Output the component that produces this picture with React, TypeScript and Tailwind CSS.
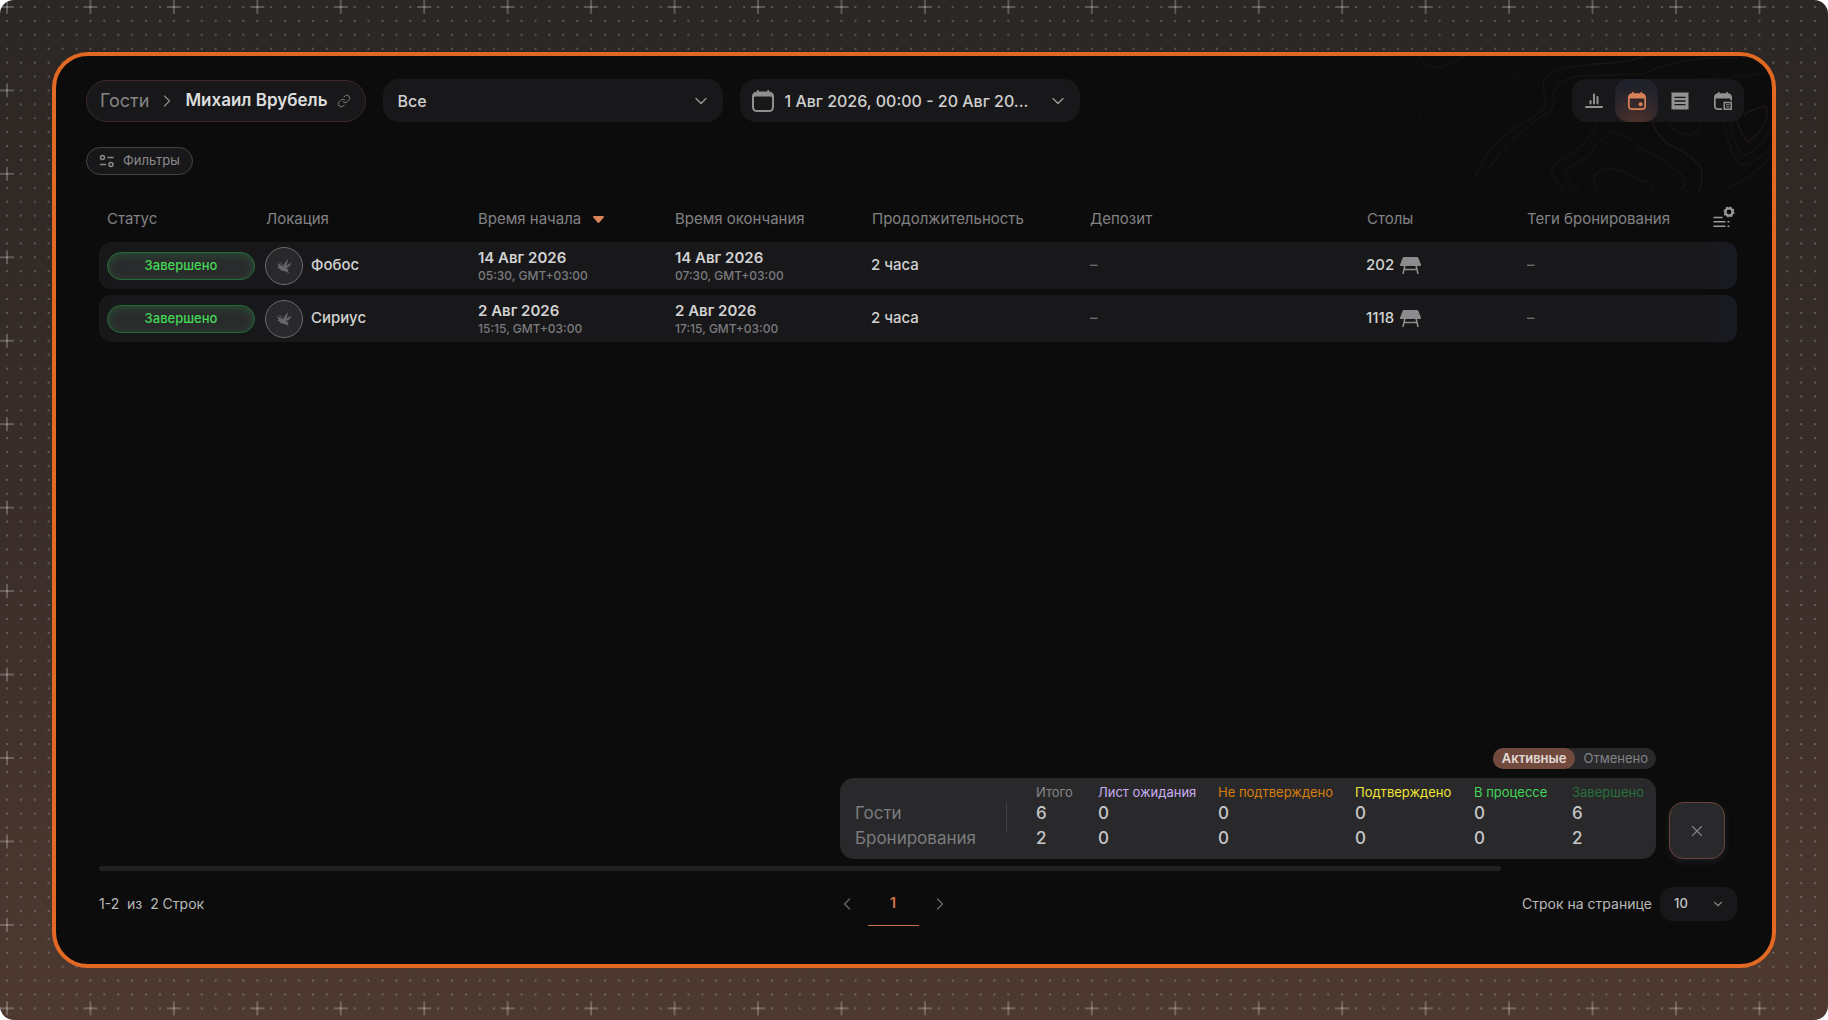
import React from 'react';
import { ChevronDown, ChevronLeft, ChevronRight, Link as LinkIcon, X } from 'lucide-react';
import clsx from 'clsx';

const bookings = [
  {
    id: 1,
    location: 'Фобос',
    start: ['14 Авг 2026', '05:30, GMT+03:00'],
    end: ['14 Авг 2026', '07:30, GMT+03:00'],
    duration: '2 часа',
    table: '202',
  },
  {
    id: 2,
    location: 'Сириус',
    start: ['2 Авг 2026', '15:15, GMT+03:00'],
    end: ['2 Авг 2026', '17:15, GMT+03:00'],
    duration: '2 часа',
    table: '1118',
  },
];

const summary = [
  { label: 'Итого', color: 'text-[#858587]', guests: 6, bookings: 2 },
  { label: 'Лист ожидания', color: 'text-[#c9aef0]', guests: 0, bookings: 0 },
  { label: 'Не подтверждено', color: 'text-[#d67d0c]', guests: 0, bookings: 0 },
  { label: 'Подтверждено', color: 'text-[#eee535]', guests: 0, bookings: 0 },
  { label: 'В процессе', color: 'text-[#41d657]', guests: 0, bookings: 0 },
  { label: 'Завершено', color: 'text-[#28703b]', guests: 6, bookings: 2 },
];

const ChartIcon = () => (
  <svg viewBox="0 0 18 18" className="size-[18px]" fill="currentColor">
    <rect x="0" y="14" width="18" height="2" rx="1" />
    <rect x="4.5" y="8" width="2" height="4.5" rx="1" />
    <rect x="8" y="1.5" width="2" height="11" rx="1" />
    <rect x="11.5" y="4" width="2" height="8.5" rx="1" />
  </svg>
);

const CalendarIcon = () => (
  <svg viewBox="0 0 18 18" className="size-[18px]" fill="currentColor">
    <path
      fillRule="evenodd"
      d="M4 0h1.6v1.2h6.8V0H14v1.3c2.4.2 4 1.6 4 4V14c0 2.500-1.500 4-4 4H4c-2.500 0-4-1.500-4-4V5.300c0-2.400 1.600-3.800 4-4zM1.700 6.500V14c0 1.500.8 2.300 2.300 2.300h10c1.500 0 2.300-.8 2.300-2.300V6.500z"
    />
    <circle cx="12.600" cy="12.300" r="2" />
  </svg>
);

const ReceiptIcon = () => (
  <svg viewBox="0 0 18 18" className="size-[18px]">
    <path
      fill="currentColor"
      d="M.5 0l1.400 1L3.300 0l1.400 1 1.500-1 1.400 1L9 0l1.400 1 1.400-1 1.500 1 1.400-1 1.400 1 1.400-1v18l-1.400-1-1.400 1-1.400-1-1.500 1-1.400-1L9 18l-1.400-1-1.400 1-1.500-1-1.400 1-1.400-1-1.400 1z"
    />
    <path stroke="#18181a" strokeWidth="1.300" d="M3.500 5.300h11M3.500 9h11M3.500 12.700h11" />
  </svg>
);

const CalendarNoteIcon = () => (
  <svg viewBox="0 0 18 18" className="size-[18px]" fill="currentColor">
    <path d="M4 0h1.600v1.200h6.800V0H14v1.300c2.400.2 4 1.600 4 4V8.500h-1.700V6.500H1.700V14c0 1.500.8 2.300 2.300 2.300h4V18H4c-2.500 0-4-1.500-4-4V5.300c0-2.400 1.600-3.800 4-4z" />
    <path fillRule="evenodd" d="M9.500 9.700H18V18H9.500zM11 11.200v5.300h5.500v-5.300z" />
    <path d="M12 12.200h3.500v1.100H12zM12 14.400h3.500v1.100H12z" />
  </svg>
);

const DateIcon = () => (
  <svg viewBox="0 0 22 22" className="size-[22px] shrink-0 text-[#8f8f90]" fill="currentColor">
    <path
      fillRule="evenodd"
      d="M5 0h1.700v1.500h8.600V0H17v1.600c3.200.3 5 2 5 5V17c0 3.200-1.800 5-5 5H5c-3.200 0-5-1.800-5-5V6.600c0-3 1.800-4.700 5-5zM2 7.500V17c0 2.100 1 3.100 3 3.100h12c2 0 3-1 3-3.100V7.500c-.3-.7-1-1-2-1H4c-1 0-1.700.3-2 1z"
    />
  </svg>
);

const FiltersIcon = () => (
  <svg viewBox="0 0 16 14" className="h-3.5 w-4" fill="none" stroke="currentColor" strokeWidth="1.500">
    <circle cx="3.500" cy="3.500" r="2" />
    <path d="M9 3.500h5M1.500 10.500h5" strokeLinecap="round" />
    <circle cx="12" cy="10.500" r="2" />
  </svg>
);

const TableIcon = () => (
  <svg viewBox="0 0 21 17" className="h-[17px] w-[21px] text-[#8c8c8e]" fill="currentColor">
    <path d="M4 0h13c.7 0 1.200.3 1.400 1l2.500 6.500c.3.900-.1 1.500-1 1.500H1.100c-.9 0-1.300-.6-1-1.500L2.600 1C2.800.3 3.300 0 4 0z" />
    <path fill="none" stroke="currentColor" strokeWidth="1.600" d="M5 8L3 17M16 8l2 9M4.200 12.500h12.600" />
  </svg>
);

const ColumnsIcon = () => (
  <svg viewBox="0 0 22 22" className="size-[22px]" fill="none" stroke="currentColor">
    <path strokeWidth="1.400" d="M.5 11.500h9M.5 15.800h12M14.500 15.800h2M.5 20.200h12M14.500 20.200h2" />
    <circle cx="16" cy="6" r="3.600" strokeWidth="2.400" />
    <circle cx="16" cy="6" r="5" strokeWidth="1.200" strokeDasharray="2 1.930" />
  </svg>
);

const FalconIcon = () => (
  <svg viewBox="0 0 16 16" className="size-4 text-[#68686b]" fill="currentColor">
    <path d="M0 5l4 1.500 3 2L9.500 4 12 1 11 5.500 10 8 16 4l-4 5-2.500 1 3 1.500-1 1.500 2 2.500-5-2.500L4 12l.5-1L1 9.500l2-.5L1.500 7 3 7.200z" />
    <path fill="none" stroke="currentColor" strokeWidth=".8" d="M3 4l4 3M11 9.500l4-3" />
  </svg>
);

const DotGrid = () => (
  <svg className="pointer-events-none absolute inset-0 size-full" aria-hidden="true">
    <defs>
      <pattern id="dots" width="13.908" height="13.908" patternUnits="userSpaceOnUse">
        <rect x="6" y="6" width="2" height="2" fill="#fff" fillOpacity=".22" />
      </pattern>
      <pattern id="plus" width="83.450" height="83.450" patternUnits="userSpaceOnUse">
        <path d="M0 7h14M7 0v14" stroke="#fff" strokeOpacity=".3" strokeWidth="1.500" />
      </pattern>
    </defs>
    <rect width="100%" height="100%" fill="url(#dots)" />
    <rect width="100%" height="100%" fill="url(#plus)" />
  </svg>
);

const Contours = () => (
  <>
    <svg
      viewBox="0 168 1176 612"
      className="pointer-events-none absolute top-0 right-0 h-[204px] w-[392px]"
      fill="none"
      strokeWidth="4"
      aria-hidden="true"
    >
      <g stroke="#111010">
        <path d="M50 190Q95 230 110 300T125 400M90 178Q140 250 150 285Q190 285 215 250Q260 200 310 168" />
        <path d="M170 395Q200 330 270 290Q350 230 395 168M195 430Q240 340 320 290Q400 250 430 200L450 168" />
        <path d="M215 465Q260 360 370 310Q450 290 470 230Q500 180 560 168M360 560Q400 470 500 420Q560 390 600 366" />
        <path d="M440 540Q450 500 500 470Q560 420 620 366M440 540Q500 550 520 573" />
        <path d="M1092 290Q1130 270 1170 262M1092 305L1176 280M1090 580L1176 520M1108 603Q1150 590 1176 555M1108 650L1176 600M1110 700L1176 650M1130 740L1176 700" />
      </g>
      <g stroke="#171312">
        <path d="M115 168Q140 205 175 203Q215 195 252 168" />
        <path d="M285 530Q330 420 430 370Q510 330 495 290Q480 240 510 220Q560 195 640 195" />
        <path d="M330 500Q400 400 500 340Q530 320 520 280Q540 230 610 228Q700 225 790 222Q880 178 1000 174L1110 172" />
        <path d="M555 573Q490 510 530 490Q620 440 655 366" />
        <path d="M600 573Q540 530 560 510Q600 480 620 470Q680 395 705 395Q740 400 780 445Q900 500 918 545Q915 565 890 573" />
        <path d="M655 573Q630 540 650 520Q670 505 700 507Q740 515 780 540Q830 550 818 573" />
        <path d="M862 366Q880 400 930 405Q955 400 965 366M945 235Q1050 240 1150 218" />
        <path d="M1050 366Q1070 460 1090 465Q1130 465 1176 380M1030 366Q1060 490 1085 495Q1130 490 1176 440M1030 573Q1120 530 1176 470" />
      </g>
      <g stroke="#211714">
        <path d="M640 192Q740 190 795 168M815 366Q830 400 860 430Q950 470 965 510Q968 550 955 573" />
        <path d="M1070 360Q1090 420 1105 423Q1120 420 1155 370Q1168 325 1155 320Q1130 320 1092 345" />
      </g>
    </svg>
    <svg
      viewBox="0 0 80 90"
      className="pointer-events-none absolute bottom-0 left-0 h-[90px] w-20"
      fill="none"
      stroke="#131212"
      aria-hidden="true"
    >
      <path d="M0 14Q14 6 26 5M0 24Q16 16 30 14M0 33Q14 22 30 24M0 44Q14 36 28 37M0 55Q14 42 30 43M3 62Q16 50 32 53M18 84Q28 74 40 72Q50 68 54 62M28 88Q46 78 60 79Q70 78 76 74" />
    </svg>
  </>
);

const TopBar = () => (
  <header className="flex items-center gap-[17px] pr-7 pl-[30px]">
    <nav className="flex h-[42px] shrink-0 items-center rounded-full border border-[#3b2a27] bg-[#18181a] pr-3.5 pl-[13px] text-[17px]">
      <a href="#guests" className="text-lg text-[#868686]">
        Гости
      </a>
      <ChevronRight className="mx-2 size-5 text-[#8a8a8a]" strokeWidth={1.5} />
      <a href="#guest" className="font-semibold text-[#dedede]">
        Михаил Врубель
      </a>
      <LinkIcon className="ml-2.5 size-3.5 text-[#858585]" strokeWidth={1.5} />
    </nav>

    <div className="relative w-[340px]">
      <select
        aria-label="Тип"
        className="h-[43px] w-full appearance-none rounded-[16px] bg-[#18181a] pr-10 pl-[14px] text-base font-medium text-[#cfcfcf]"
      >
        <option>Все</option>
      </select>
      <ChevronDown className="pointer-events-none absolute top-3 right-3 size-5 text-[#9a9a9a]" strokeWidth={1.5} />
    </div>

    <button className="flex h-[43px] w-[340px] items-center gap-2.5 rounded-[16px] bg-[#18181a] px-3 text-[#cfcfcf]">
      <DateIcon />
      <span className="truncate text-base font-medium">1 Авг 2026, 00:00 - 20 Авг 20...</span>
      <ChevronDown className="ml-auto size-5 shrink-0 text-[#9a9a9a]" strokeWidth={1.5} />
    </button>

    <div className="ml-auto flex overflow-hidden rounded-[14px] bg-[#18181a] text-[#929292]">
      <button aria-label="Статистика" className="flex h-[43px] w-[43px] items-center justify-center">
        <ChartIcon />
      </button>
      <button
        aria-label="Бронирования"
        className="flex h-[43px] w-[43px] items-center justify-center rounded-[14px] bg-[radial-gradient(circle_at_50%_100%,#4e322b,#20212b_75%)] text-[#d98158]"
      >
        <CalendarIcon />
      </button>
      <button aria-label="Счета" className="flex h-[43px] w-[43px] items-center justify-center">
        <ReceiptIcon />
      </button>
      <button aria-label="Журнал" className="flex h-[43px] w-[43px] items-center justify-center">
        <CalendarNoteIcon />
      </button>
    </div>
  </header>
);

const DateCell = ({ value }: { value: string[] }) => (
  <td className="bg-[#18181a] pl-2">
    <p className="text-[15px] leading-5 font-semibold text-[#d2d2d2]">{value[0]}</p>
    <p className="text-xs leading-4 text-[#7b7b7d]">{value[1]}</p>
  </td>
);

const BookingsTable = () => (
  <table className="w-full table-fixed border-separate border-spacing-x-0 border-spacing-y-1.5 text-left text-[15px]">
    <colgroup>
      <col className="w-[159px]" />
      <col className="w-[212px]" />
      <col className="w-[197px]" />
      <col className="w-[197px]" />
      <col className="w-[218px]" />
      <col className="w-[277px]" />
      <col className="w-[160px]" />
      <col className="w-[178px]" />
      <col className="w-[40px]" />
    </colgroup>
    <thead>
      <tr className="h-9 text-[#828284] [&>th]:pt-0.5 [&>th]:pl-2 [&>th]:font-normal">
        <th>Статус</th>
        <th>Локация</th>
        <th aria-sort="descending">
          <button className="flex items-center gap-3">
            Время начала
            <svg viewBox="0 0 11 7" className="h-[7px] w-[11px] text-[#d98158]" fill="currentColor">
              <path d="M1 0h9c1 0 1.300.9.700 1.600L6.400 6.500c-.5.600-1.300.6-1.800 0L.3 1.600C-.3.900 0 0 1 0z" />
            </svg>
          </button>
        </th>
        <th>Время окончания</th>
        <th>Продолжительность</th>
        <th>Депозит</th>
        <th>Столы</th>
        <th>Теги бронирования</th>
        <td className="pl-4">
          <button aria-label="Настроить колонки" className="flex pb-0.5 text-[#9a9a9b]">
            <ColumnsIcon />
          </button>
        </td>
      </tr>
    </thead>
    <tbody>
      {bookings.map((b) => (
        <tr key={b.id} className="h-[47px] font-medium text-[#d2d2d2]">
          <td className="rounded-l-xl bg-[#18181a] pr-[3px] pl-2">
            <span className="flex h-7 items-center justify-center rounded-full border border-[#256b39] bg-[#2a2b2d] text-[13px] text-[#43d856] shadow-[inset_0_2px_10px_#2b4f34]">
              Завершено
            </span>
          </td>
          <td className="bg-[#18181a] pl-[7px]">
            <div className="flex items-center gap-2">
              <span className="flex size-[38px] items-center justify-center rounded-full border border-[#6c6c6e] bg-[#29292c]">
                <FalconIcon />
              </span>
              {b.location}
            </div>
          </td>
          <DateCell value={b.start} />
          <DateCell value={b.end} />
          <td className="bg-[#18181a] pl-[7px]">{b.duration}</td>
          <td className="bg-[#18181a] pl-2 text-[#6c6c6e]">–</td>
          <td className="bg-[#18181a] pl-[7px]">
            <div className="flex items-center gap-1.5">
              {b.table}
              <TableIcon />
            </div>
          </td>
          <td className="bg-[#18181a] pl-2 text-[#6c6c6e]">–</td>
          <td className="rounded-r-xl bg-linear-to-r from-[#18181a] to-[#191b23]" />
        </tr>
      ))}
    </tbody>
  </table>
);

const SummaryRow = ({ title, field, divider }: { title: string; field: 'guests' | 'bookings'; divider?: boolean }) => (
  <tr className="h-[25px]">
    <th scope="row" className="pl-[15px] text-left text-[17px] leading-[25px] font-normal text-[#7c7c7e]">
      {title}
    </th>
    {divider && (
      <td rowSpan={2} className="pt-0.5 align-top">
        <div className="h-[29px] w-px bg-[#424244]" />
      </td>
    )}
    {summary.map((s) => (
      <td key={s.label} className="text-[17px] leading-[25px] font-medium text-[#c6c6c8]">
        {s[field]}
      </td>
    ))}
  </tr>
);

const Summary = () => (
  <div className="mt-auto flex items-end justify-end gap-[13px] pr-3">
    <div className="flex flex-col items-end gap-[9px]">
      <div className="flex h-[21px] rounded-full bg-[#29292b] text-[13px] leading-[21px]">
        <button className="rounded-full bg-[#724a3d] px-[9px] font-semibold text-[#e2dad7]">Активные</button>
        <button className="px-2 text-[#838385]">Отменено</button>
      </div>
      <div className="rounded-[14px] bg-[#29292b] pt-[5px] pb-2">
        <table className="w-[816px] table-fixed">
          <colgroup>
            <col className="w-[166px]" />
            <col className="w-[30px]" />
            <col className="w-[62px]" />
            <col className="w-[120px]" />
            <col className="w-[137px]" />
            <col className="w-[119px]" />
            <col className="w-[98px]" />
            <col className="w-[84px]" />
          </colgroup>
          <thead>
            <tr className="h-[18px] text-left text-[13px] leading-[18px] whitespace-nowrap">
              <td />
              <td />
              {summary.map((s) => (
                <th key={s.label} className={clsx('font-normal', s.color)}>
                  {s.label}
                </th>
              ))}
            </tr>
          </thead>
          <tbody>
            <SummaryRow title="Гости" field="guests" divider />
            <SummaryRow title="Бронирования" field="bookings" />
          </tbody>
        </table>
      </div>
    </div>
    <button
      aria-label="Закрыть"
      className="flex h-[57px] w-14 items-center justify-center rounded-[14px] border border-[#6a4438] bg-[#29292b] text-[#858587] shadow-[0_3px_6px_#1d1d20]"
    >
      <X className="size-[18px]" strokeWidth={1.5} />
    </button>
  </div>
);

const Pagination = () => (
  <footer className="mt-2.5 grid grid-cols-[1fr_auto_1fr] items-center text-[#b9b9b9]">
    <p className="text-sm whitespace-pre">1-2  из  2 Строк</p>
    <nav className="flex items-center pr-[50px]">
      <button aria-label="Назад" className="text-[#6a6a6c]">
        <ChevronLeft className="size-5" strokeWidth={1.5} />
      </button>
      <button className="mx-[11px] h-[45px] w-[51px] border-b border-[#c8714d] text-[15px] font-semibold text-[#d0714a]">1</button>
      <button aria-label="Вперёд" className="text-[#6a6a6c]">
        <ChevronRight className="size-5" strokeWidth={1.5} />
      </button>
    </nav>
    <div className="flex items-center justify-end gap-2">
      <label htmlFor="page-size" className="text-sm">
        Строк на странице
      </label>
      <div className="relative">
        <select
          id="page-size"
          className="block h-[34px] w-[77px] appearance-none rounded-[12px] bg-[#18181a] pl-3.5 text-[13px] font-medium text-[#c4c4c4]"
        >
          <option>10</option>
          <option>25</option>
          <option>50</option>
        </select>
        <ChevronDown className="pointer-events-none absolute top-2.5 right-3 size-3.5 text-[#858585]" strokeWidth={2} />
      </div>
    </div>
  </footer>
);

export default function App() {
  return (
    <div className="relative flex min-h-screen overflow-hidden rounded-[14px] bg-linear-to-b from-[#2b2724] via-[#3a2d29] to-[#4e3930] p-[52px] font-['Inter',sans-serif]">
      <DotGrid />
      <main className="relative flex min-w-0 flex-1 flex-col overflow-hidden rounded-[36px] border-4 border-[#e26924] bg-[#0c0c0c] pt-[23px] pb-[38px]">
        <Contours />
        <div className="relative flex flex-1 flex-col">
          <TopBar />
          <div className="mt-[25px] pl-[30px]">
            <button className="flex h-7 items-center gap-2 rounded-full border border-[#434346] bg-[#18181a] px-3 text-[13px] text-[#8a8a8a]">
              <FiltersIcon />
              Фильтры
            </button>
          </div>
          <div className="mt-[19px] flex flex-1 flex-col pr-[35px] pl-[43px]">
            <BookingsTable />
            <Summary />
            <div className="mt-[7px] mr-[236px] h-[5px] rounded-full bg-[#222222]" />
            <Pagination />
          </div>
        </div>
      </main>
    </div>
  );
}
